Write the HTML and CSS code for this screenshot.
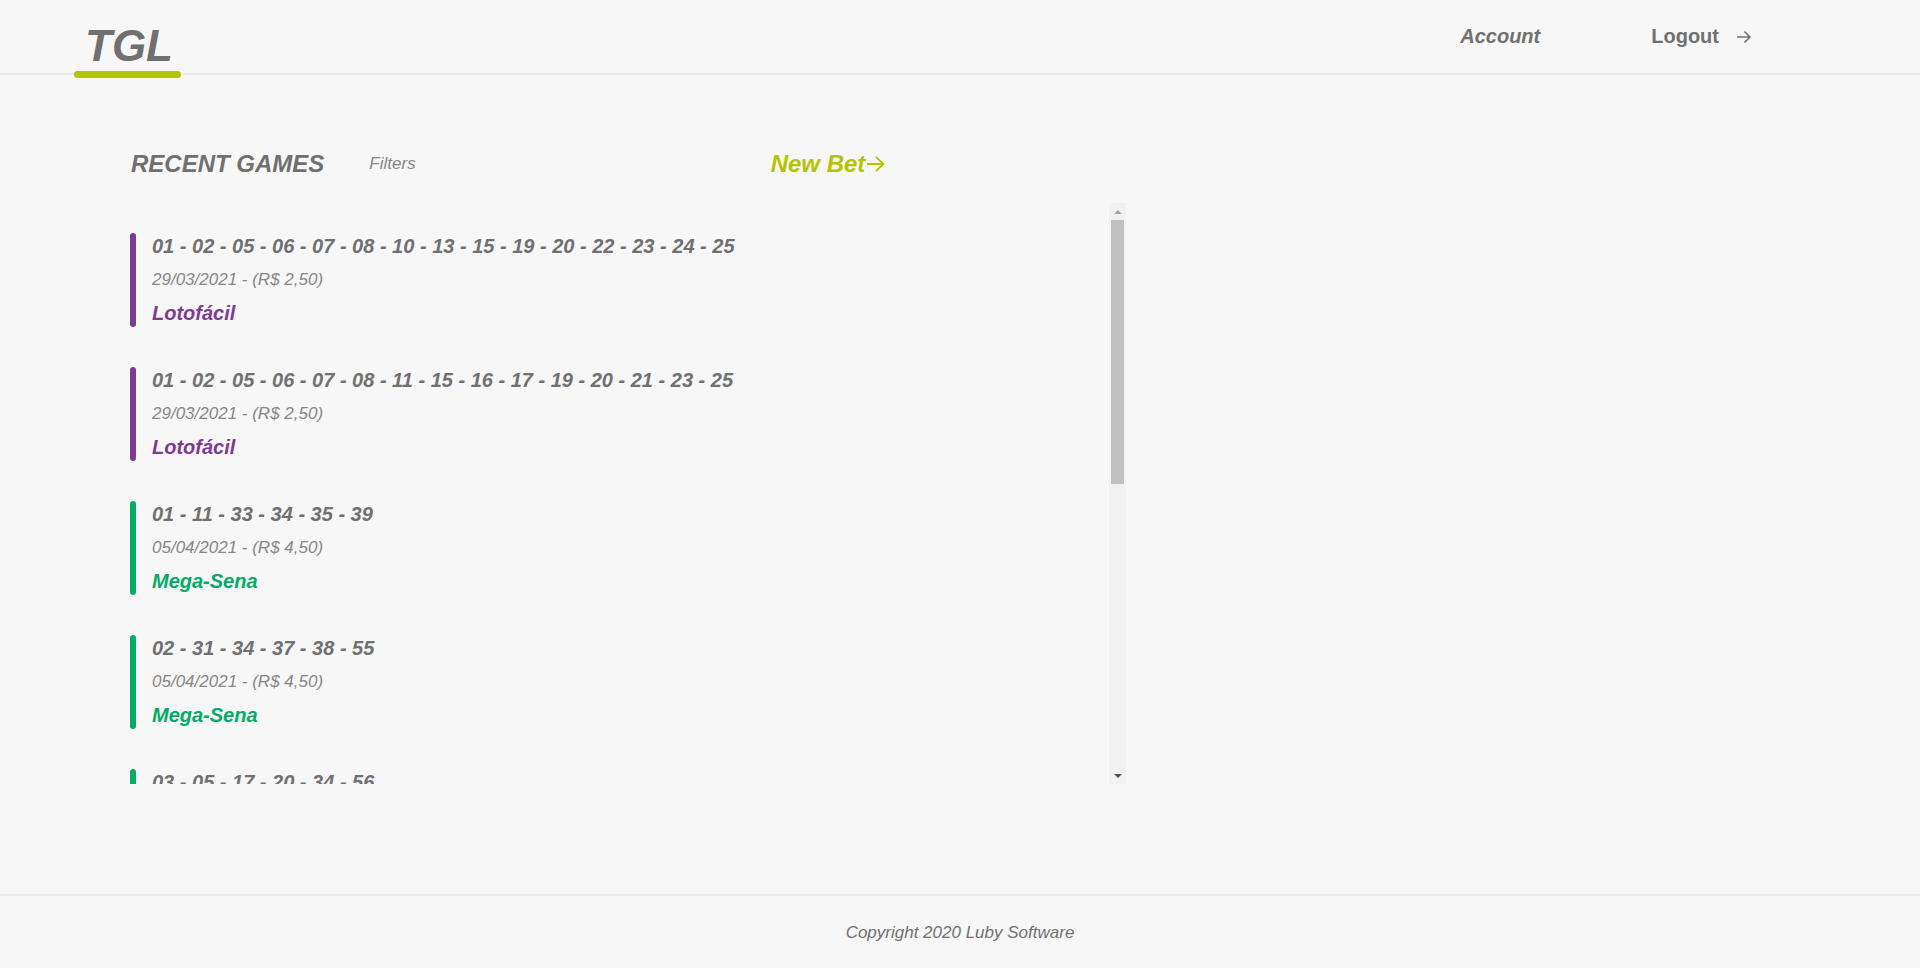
FILE: index.html
```html
<!DOCTYPE html>
<html lang="pt-BR">
<head>
<meta charset="utf-8">
<title>TGL</title>
<link rel="stylesheet" href="styles.css">
</head>
<body>
<header class="header">
  <div class="logo">TGL</div>
  <nav class="nav">
    <a class="nav-account" href="#">Account</a>
    <a class="nav-logout" href="#">Logout
      <svg class="arrow-small" viewBox="0 0 16 14" width="16" height="14"><path d="M1 7h13M8.500 1.500 14 7l-5.500 5.500" fill="none" stroke="#707070" stroke-width="1.600"/></svg>
    </a>
  </nav>
</header>
<main class="main">
  <div class="title-row">
    <h1 class="title">RECENT GAMES</h1>
    <span class="filters">Filters</span>
    <a class="new-bet" href="#">New Bet
      <svg class="arrow-new" viewBox="0 0 18 16" width="18" height="16"><path d="M0 8h16.500M9 1l7.500 7L9 15" fill="none" stroke="#b5c401" stroke-width="1.800"/></svg>
    </a>
  </div>
  <section class="list">
    <article class="game lotofacil"><div class="bar"></div><div class="info"><div class="numbers">01 - 02 - 05 - 06 - 07 - 08 - 10 - 13 - 15 - 19 - 20 - 22 - 23 - 24 - 25</div><div class="meta">29/03/2021 - (R$ 2,50)</div><div class="name">Lotofácil</div></div></article>
    <article class="game lotofacil"><div class="bar"></div><div class="info"><div class="numbers">01 - 02 - 05 - 06 - 07 - 08 - 11 - 15 - 16 - 17 - 19 - 20 - 21 - 23 - 25</div><div class="meta">29/03/2021 - (R$ 2,50)</div><div class="name">Lotofácil</div></div></article>
    <article class="game mega"><div class="bar"></div><div class="info"><div class="numbers">01 - 11 - 33 - 34 - 35 - 39</div><div class="meta">05/04/2021 - (R$ 4,50)</div><div class="name">Mega-Sena</div></div></article>
    <article class="game mega"><div class="bar"></div><div class="info"><div class="numbers">02 - 31 - 34 - 37 - 38 - 55</div><div class="meta">05/04/2021 - (R$ 4,50)</div><div class="name">Mega-Sena</div></div></article>
    <article class="game mega"><div class="bar"></div><div class="info"><div class="numbers">03 - 05 - 17 - 20 - 34 - 56</div></div></article>
    <div class="scrollbar" aria-hidden="true">
      <div class="scroll-btn"><span class="scroll-up"></span></div>
      <div class="scroll-track"><div class="scroll-thumb"></div></div>
      <div class="scroll-btn"><span class="scroll-down"></span></div>
    </div>
  </section>
</main>
<footer class="footer">Copyright 2020 Luby Software</footer>
</body>
</html>
```

FILE: styles.css
```css
* {
  box-sizing: border-box;
}

html,
body {
  height: 100%;
}

body {
  margin: 0;
  display: flex;
  flex-direction: column;
  background: #f7f7f7;
  color: #707070;
  font-family: "Liberation Sans", Arial, sans-serif;
  overflow: hidden;
}

a {
  color: inherit;
  text-decoration: none;
}

.header {
  flex: none;
  height: 75px;
  display: flex;
  justify-content: space-between;
  border-bottom: 2px solid #ebebeb;
  padding: 0 168px 0 74px;
}

.logo {
  position: relative;
  width: 107px;
  height: 75px;
  padding: 21px 0 0 3px;
  text-align: center;
  font-size: 44px;
  line-height: 50px;
  font-weight: 700;
  font-style: italic;
}

.logo::after {
  content: "";
  position: absolute;
  left: 0;
  right: 0;
  top: 71px;
  height: 7px;
  border-radius: 6px;
  background: #b5c401;
}

.nav {
  display: flex;
  align-items: flex-start;
  gap: 111px;
  padding-top: 25px;
  font-size: 20px;
  line-height: 23px;
  font-weight: 700;
}

.nav-account {
  font-style: italic;
}

.nav-logout {
  display: flex;
  align-items: center;
  gap: 17px;
}

.main {
  flex: 1;
  min-height: 0;
  padding: 75px 0 0 130px;
}

.title-row {
  display: flex;
  align-items: center;
  height: 28px;
  font-style: italic;
}

.title {
  margin: 0;
  padding-left: 1px;
  font-size: 24px;
  line-height: 28px;
  font-weight: 700;
  font-style: italic;
}

.filters {
  margin-left: 45px;
  font-size: 17px;
  color: #868686;
}

.new-bet {
  display: flex;
  align-items: center;
  gap: 2px;
  margin-left: 355px;
  font-size: 24px;
  line-height: 28px;
  font-weight: 700;
  color: #b5c401;
}

.list {
  position: relative;
  width: 996px;
  height: 581px;
  margin-top: 25px;
  padding-top: 30px;
  display: flex;
  flex-direction: column;
  gap: 40px;
  overflow: hidden;
}

.scrollbar {
  position: absolute;
  top: 0;
  right: 0;
  bottom: 0;
  width: 17px;
  display: flex;
  flex-direction: column;
  background: #f1f1f1;
}

.scroll-btn {
  flex: none;
  height: 17px;
  display: flex;
  align-items: center;
  justify-content: center;
}

.scroll-up,
.scroll-down {
  width: 0;
  height: 0;
  border-left: 4px solid transparent;
  border-right: 4px solid transparent;
}

.scroll-up {
  border-bottom: 4px solid #a3a3a3;
}

.scroll-down {
  border-top: 4px solid #505050;
}

.scroll-track {
  flex: 1;
  padding: 0 2px;
}

.scroll-thumb {
  height: 264px;
  background: #c1c1c1;
}

.game {
  flex: none;
  height: 94px;
  display: flex;
  gap: 16px;
}

.bar {
  flex: none;
  width: 6px;
  height: 94px;
  border-radius: 6px;
}

.info {
  padding-top: 2px;
}

.lotofacil .bar {
  background: #7f3992;
}

.lotofacil .name {
  color: #7f3992;
}

.mega .bar {
  background: #01ac66;
}

.mega .name {
  color: #01ac66;
}

.numbers {
  font-size: 20px;
  line-height: 23px;
  font-weight: 700;
  font-style: italic;
}

.meta {
  margin-top: 12px;
  font-size: 17px;
  line-height: 19px;
  font-style: italic;
  color: #868686;
}

.name {
  margin-top: 13px;
  font-size: 20px;
  line-height: 23px;
  font-weight: 700;
  font-style: italic;
}

.footer {
  flex: none;
  height: 74px;
  border-top: 2px solid #ebebeb;
  text-align: center;
  padding-top: 27px;
  font-size: 17px;
  line-height: 19px;
  font-style: italic;
}
```
